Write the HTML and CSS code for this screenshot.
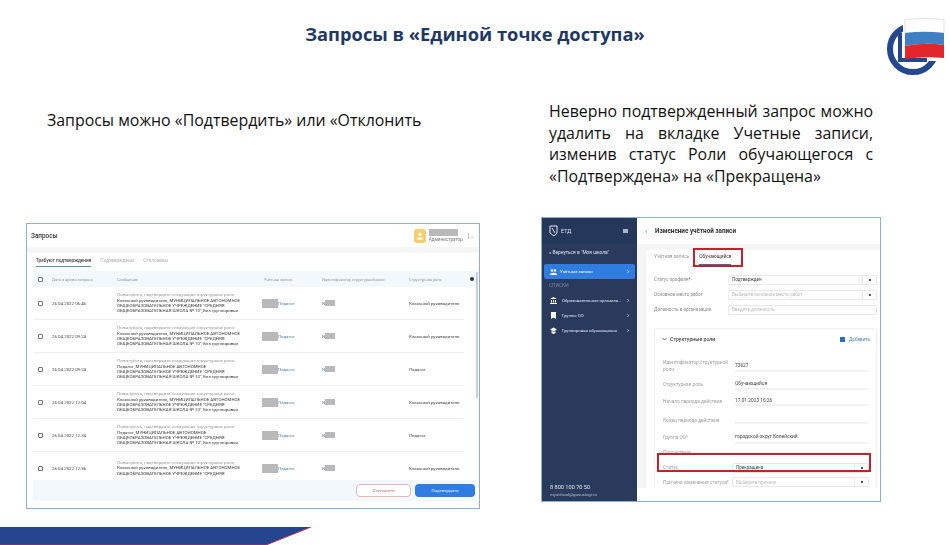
FILE: index.html
```html
<!DOCTYPE html>
<html lang="ru">
<head>
  <meta charset="UTF-8" />
  <title>Запросы в «Единой точке доступа»</title>
  <link rel="stylesheet" href="styles.css">
</head>
<body>
<div class="slide">

  <!-- Title + logo -->
  <h1 class="slide-title">Запросы в «Единой точке доступа»</h1>
  <svg class="logo" width="60" height="60" viewBox="0 0 60 60">
    <circle cx="28" cy="33" r="23" fill="none" stroke="#24478f" stroke-width="6"/>
    <rect x="18" y="1" width="42" height="44" fill="#fff"/>
    <path d="M15 17 V44 H42" fill="none" stroke="#24478f" stroke-width="4"/>
    <path d="M20 3.5 Q40 1 59 3.5 V17 H20 Z" fill="#fff" stroke="#ccc" stroke-width=".6"/>
    <path d="M20 17 Q40 14.5 59 17 V29 Q40 26 20 30 Z" fill="#3f7fc4"/>
    <path d="M20 30 Q40 26 59 29 V42 Q40 40 20 43 Z" fill="#e2262b"/>
  </svg>

  <div class="columns">

    <!-- Left column -->
    <section class="col col-left">
      <p class="intro intro-left">Запросы можно «Подтвердить» или «Отклонить</p>

      <div class="window requests">
        <div class="req-top">
          <span class="req-title">Запросы</span>
          <span class="avatar">
            <svg width="8" height="8" viewBox="0 0 8 8"><circle cx="4" cy="2.4" r="1.6" fill="#fff"/><path d="M1 7.5 C1 4.5 7 4.5 7 7.5 Z" fill="#fff"/></svg>
          </span>
          <div class="user">
            <span class="redact user-name"></span>
            <span class="user-role">Администратор</span>
          </div>
          <span class="logout">[→</span>
        </div>
        <div class="req-band"></div>
        <div class="req-tabs">
          <span class="req-tab active">Требуют подтверждения</span>
          <span class="req-tab">Подтверждены</span>
          <span class="req-tab">Отклонены</span>
        </div>
        <div class="req-row req-head">
          <span class="check"></span>
          <span>Дата и время запроса</span>
          <span>Сообщение</span>
          <span>Учётная запись</span>
          <span>Идентификатор структурной роли</span>
          <span>Структурная роль</span>
          <span class="gear"></span>
        </div>
        <div class="req-body">
          <div class="req-row">
            <span class="check"></span>
            <span class="date">26.04.2022 06:46</span>
            <div class="msg"><span class="msg-note">Пожалуйста, подтвердите следующие структурные роли:</span>Классный руководитель, МУНИЦИПАЛЬНОЕ АВТОНОМНОЕ<br>ОБЩЕОБРАЗОВАТЕЛЬНОЕ УЧРЕЖДЕНИЕ "СРЕДНЯЯ<br>ОБЩЕОБРАЗОВАТЕЛЬНАЯ ШКОЛА № 10", Без группировки</div>
            <span class="account"><i class="redact"></i>Педагог</span>
            <span class="ident">N<i class="redact"></i></span>
            <span class="role">Классный руководитель</span>
          </div>
          <div class="req-row">
            <span class="check"></span>
            <span class="date">26.04.2022 09:24</span>
            <div class="msg"><span class="msg-note">Пожалуйста, подтвердите следующие структурные роли:</span>Классный руководитель, МУНИЦИПАЛЬНОЕ АВТОНОМНОЕ<br>ОБЩЕОБРАЗОВАТЕЛЬНОЕ УЧРЕЖДЕНИЕ "СРЕДНЯЯ<br>ОБЩЕОБРАЗОВАТЕЛЬНАЯ ШКОЛА № 10", Без группировки</div>
            <span class="account"><i class="redact"></i>Педагог</span>
            <span class="ident">N<i class="redact"></i></span>
            <span class="role">Классный руководитель</span>
          </div>
          <div class="req-row">
            <span class="check"></span>
            <span class="date">26.04.2022 09:24</span>
            <div class="msg"><span class="msg-note">Пожалуйста, подтвердите следующие структурные роли:</span>Педагог, МУНИЦИПАЛЬНОЕ АВТОНОМНОЕ<br>ОБЩЕОБРАЗОВАТЕЛЬНОЕ УЧРЕЖДЕНИЕ "СРЕДНЯЯ<br>ОБЩЕОБРАЗОВАТЕЛЬНАЯ ШКОЛА № 10", Без группировки</div>
            <span class="account"><i class="redact"></i>Педагог</span>
            <span class="ident">N<i class="redact"></i></span>
            <span class="role">Педагог</span>
          </div>
          <div class="req-row">
            <span class="check"></span>
            <span class="date">26.04.2022 12:04</span>
            <div class="msg"><span class="msg-note">Пожалуйста, подтвердите следующие структурные роли:</span>Классный руководитель, МУНИЦИПАЛЬНОЕ АВТОНОМНОЕ<br>ОБЩЕОБРАЗОВАТЕЛЬНОЕ УЧРЕЖДЕНИЕ "СРЕДНЯЯ<br>ОБЩЕОБРАЗОВАТЕЛЬНАЯ ШКОЛА № 10", Без группировки</div>
            <span class="account"><i class="redact"></i>Педагог</span>
            <span class="ident">N<i class="redact"></i></span>
            <span class="role">Классный руководитель</span>
          </div>
          <div class="req-row">
            <span class="check"></span>
            <span class="date">26.04.2022 12:34</span>
            <div class="msg"><span class="msg-note">Пожалуйста, подтвердите следующие структурные роли:</span>Педагог, МУНИЦИПАЛЬНОЕ АВТОНОМНОЕ<br>ОБЩЕОБРАЗОВАТЕЛЬНОЕ УЧРЕЖДЕНИЕ "СРЕДНЯЯ<br>ОБЩЕОБРАЗОВАТЕЛЬНАЯ ШКОЛА № 10", Без группировки</div>
            <span class="account"><i class="redact"></i>Педагог</span>
            <span class="ident">N<i class="redact"></i></span>
            <span class="role">Педагог</span>
          </div>
          <div class="req-row">
            <span class="check"></span>
            <span class="date">26.04.2022 12:36</span>
            <div class="msg"><span class="msg-note">Пожалуйста, подтвердите следующие структурные роли:</span>Классный руководитель, МУНИЦИПАЛЬНОЕ АВТОНОМНОЕ<br>ОБЩЕОБРАЗОВАТЕЛЬНОЕ УЧРЕЖДЕНИЕ "СРЕДНЯЯ</div>
            <span class="account"><i class="redact"></i>Педагог</span>
            <span class="ident">N<i class="redact"></i></span>
            <span class="role">Классный руководитель</span>
          </div>
        </div>
        <div class="req-foot">
          <button class="btn-reject">Отклонить</button>
          <button class="btn-confirm">Подтвердить</button>
        </div>
        <div class="scrollbar"></div>
      </div>
    </section>

    <!-- Right column -->
    <section class="col col-right">
      <p class="intro intro-right">Неверно подтвержденный запрос можно удалить на вкладке Учетные записи, изменив статус Роли обучающегося с «Подтверждена» на «Прекращена»</p>

      <div class="window account-win">
        <aside class="side">
          <div class="side-top">
            <svg width="9" height="12" viewBox="0 0 9 12"><path d="M1 1 H8 V8 L5 11 L1 8 Z M3 3 L6 8" fill="none" stroke="#dfe5ef" stroke-width="1"/></svg>
            <span>ЕТД</span>
            <span class="burger"></span>
          </div>
          <div class="side-back">« Вернуться в "Моя школа"</div>
          <div class="side-item active">
            <svg width="7" height="6" viewBox="0 0 7 6"><circle cx="2" cy="1.5" r="1.2" fill="#fff"/><circle cx="5" cy="1.5" r="1.2" fill="#fff"/><path d="M0 6 C0 3 7 3 7 6 Z" fill="#fff"/></svg>
            <span>Учётные записи</span><b>›</b>
          </div>
          <div class="side-label">СПИСКИ</div>
          <div class="side-item">
            <svg width="7" height="7" viewBox="0 0 7 7"><path d="M0 2 L3.5 0 L7 2 Z M1 3 H2 V5.5 H1 Z M3 3 H4 V5.5 H3 Z M5 3 H6 V5.5 H5 Z M0 6 H7 V7 H0 Z" fill="#fff"/></svg>
            <span>Образовательные организа...</span><b>›</b>
          </div>
          <div class="side-item">
            <svg width="7" height="7" viewBox="0 0 7 7"><path d="M1 0 H6 V7 L3.5 5.5 L1 7 Z" fill="#fff"/></svg>
            <span>Группы ОО</span><b>›</b>
          </div>
          <div class="side-item">
            <svg width="7" height="7" viewBox="0 0 7 7"><path d="M0 2.5 L3.5 .5 L7 2.5 L3.5 4.5 Z M1.5 4 L3.5 5 L5.5 4 V6 L3.5 7 L1.5 6 Z" fill="#fff"/></svg>
            <span>Группировки обучающихся</span><b>›</b>
          </div>
          <div class="side-foot">
            <div class="side-phone">8 800 100 70 50</div>
            <div class="side-mail">myschool@gosuslugi.ru</div>
          </div>
        </aside>

        <div class="main">
          <div class="main-top"><span class="back">‹</span>Изменение учётной записи</div>
          <div class="main-body">
            <div class="card">
              <div class="tabs">
                <span class="tab">Учётная запись</span>
                <span class="tab active">Обучающийся</span>
              </div>
              <div class="field">
                <span class="field-label">Статус профиля<em>*</em></span>
                <span class="input select filled">Подтвержден</span>
              </div>
              <div class="field">
                <span class="field-label">Основное место работ</span>
                <span class="input select">Выберите основное место работ</span>
              </div>
              <div class="field">
                <span class="field-label">Должность в организации</span>
                <span class="input">Введите должность</span>
              </div>

              <div class="roles">
                <div class="roles-head">
                  <span class="roles-title">
                    <svg width="5" height="4" viewBox="0 0 5 4"><path d="M.5 1 L2.5 3 L4.5 1" fill="none" stroke="#444" stroke-width=".8"/></svg>
                    Структурные роли
                  </span>
                  <span class="roles-add"><i></i>Добавить</span>
                </div>
                <div class="role-row first">
                  <span class="role-label">Идентификатор структурной роли</span>
                  <span class="role-value">73627</span>
                </div>
                <div class="role-row second">
                  <span class="role-label">Структурная роль</span>
                  <span class="role-value">Обучающийся</span>
                </div>
                <div class="role-row third">
                  <span class="role-label">Начало периода действия</span>
                  <span class="role-value">17.01.2023 16:26</span>
                </div>
                <div class="role-row fourth">
                  <span class="role-label">Конец периода действия</span>
                  <span class="role-value"></span>
                </div>
                <div class="role-row fifth">
                  <span class="role-label">Группа ОО*</span>
                  <span class="role-value">городской округ Копейский</span>
                </div>
                <div class="role-row plain subsystem">
                  <span class="role-label">Подсистема</span>
                </div>
                <div class="role-row plain status">
                  <span class="role-label">Статус</span>
                  <span class="input select filled">Прекращена</span>
                </div>
                <div class="role-row plain reason">
                  <span class="role-label">Причина изменения статуса*</span>
                  <span class="input select">Выберите причину</span>
                </div>
              </div>
            </div>
          </div>
          <div class="main-foot"></div>
        </div>

        <!-- red marks drawn over the screenshot -->
        <div class="mark mark-tab"></div>
        <div class="mark mark-status"></div>
      </div>
    </section>
  </div>

  <svg class="stripe" width="320" height="18" viewBox="0 0 320 18">
    <path d="M0 0 H311 L266 18 H0 Z" fill="#25468f"/>
    <path d="M311 0 L266 18 H0" fill="none" stroke="#b03050" stroke-width="1"/>
  </svg>
</div>
</body>
</html>
```

FILE: styles.css
```css
* {
  box-sizing: border-box;
}

body {
  margin: 0;
  background: #fff;
  font-family: "Open Sans", "Noto Sans", sans-serif;
  color: #333;
}

.slide {
  position: relative;
  width: 950px;
  height: 545px;
  overflow: hidden;
  display: flex;
  flex-direction: column;
}

.slide-title {
  margin: 0;
  padding-top: 21px;
  height: 101px;
  text-align: center;
  font-size: 18.3px;
  line-height: 25px;
  font-weight: 700;
  color: #1f3864;
}

.logo {
  position: absolute;
  left: 885px;
  top: 16px;
}

.columns {
  flex: 1;
  display: flex;
}

.col-left {
  width: 541px;
  padding-left: 26px;
}

.intro {
  margin: 0;
  color: #111;
  font-size: 15.9px;
}

.intro-left {
  height: 122px;
  padding: 8px 0 0 21px;
  line-height: 22px;
}

.intro-right {
  width: 324px;
  height: 116px;
  margin-left: 8px;
  line-height: 21.7px;
  text-align: justify;
}

.window {
  position: relative;
  background: #fff;
  border: 1px solid #8fb0cc;
  overflow: hidden;
  font-family: Roboto, "Noto Sans", sans-serif;
  white-space: nowrap;
}

.redact {
  display: inline-block;
  background: #b9b9b9;
}

/* left screenshot: requests table */
.requests {
  width: 454px;
  height: 286px;
  filter: blur(.4px);
}

.req-top {
  height: 23px;
  display: flex;
  align-items: center;
  padding: 0 5px 0 4px;
}

.req-title {
  flex: 1;
  font-size: 6.4px;
  font-weight: 500;
  color: #333;
}

.avatar {
  width: 12px;
  height: 14px;
  background: #f7cd6d;
  border-radius: 3px;
  display: flex;
  align-items: center;
  justify-content: center;
  margin-right: 3px;
}

.user {
  width: 39px;
  display: flex;
  flex-direction: column;
  gap: 1px;
  font-size: 4.6px;
  color: #777;
}

.user-name {
  width: 29px;
  height: 7px;
}

.user-role {
  line-height: 6px;
}

.logout {
  font-size: 5px;
  color: #888;
}

.req-band {
  height: 6px;
  background: #f6f6f6;
}

.req-tabs {
  height: 14px;
  display: flex;
  gap: 9px;
  padding: 0 0 0 9px;
  align-items: flex-end;
  font-size: 4.7px;
  color: #b0b0b0;
}

.req-tab {
  height: 12px;
  line-height: 12px;
}

.req-tab.active {
  color: #444;
  font-weight: 500;
  border-bottom: 1.5px solid #4f94b5;
}

.req-row {
  display: grid;
  grid-template-columns: 19px 65px 145px 60px 87px 53px;
  align-items: center;
  height: 33px;
  margin: 0 15px 0 6px;
  font-size: 4.4px;
  color: #444;
  border-bottom: 1px solid #f0f0f0;
}

.req-head {
  grid-template-columns: 19px 65px 147px 58px 87px 61px 8px;
  height: 16px;
  margin: 4px 3px 0 6px;
  background: #f3f8fc;
  color: #999;
  font-size: 3.9px;
  border: 0;
}

.gear {
  width: 4px;
  height: 4px;
  background: #333;
  border-radius: 50%;
}

.req-body {
  height: 193px;
  overflow: hidden;
}

.check {
  width: 5px;
  height: 5px;
  margin-left: 5px;
  border: .8px solid #777;
  border-radius: 1px;
}

.msg {
  font-size: 4.4px;
  line-height: 5.35px;
  color: #3c3c3c;
}

.msg-note {
  display: block;
  color: #999;
}

.account {
  color: #4f7fa8;
  display: flex;
  align-items: center;
}

.account .redact {
  width: 16px;
  height: 9px;
}

.ident {
  color: #4f7fa8;
  display: flex;
  align-items: center;
}

.ident .redact {
  width: 10px;
  height: 6px;
}

.req-foot {
  height: 21px;
  margin: 0 3px 0 6px;
  background: #f3f8fc;
  display: flex;
  justify-content: flex-end;
  align-items: center;
  gap: 4px;
  padding-right: 1px;
}

.req-foot button {
  height: 13px;
  border-radius: 4px;
  padding: 0;
  font-family: inherit;
  font-size: 4.4px;
}

.btn-reject {
  width: 55px;
  background: #fff;
  border: 1px solid #e3b7b7;
  color: #b56a6a;
}

.btn-confirm {
  width: 60px;
  background: #2f7de1;
  border: none;
  color: #e8f0fb;
}

.scrollbar {
  position: absolute;
  right: 1px;
  top: 48px;
  width: 2px;
  height: 126px;
  background: #c5cfdb;
}

/* right screenshot: account form */
.account-win {
  width: 340px;
  height: 285px;
  display: flex;
  filter: blur(.55px);
}

.side {
  width: 95px;
  background: #2a3a5c;
  color: #dfe5ef;
  display: flex;
  flex-direction: column;
  font-size: 4.8px;
}

.side svg {
  flex: none;
}

.side-top {
  height: 26px;
  background: #25375a;
  display: flex;
  align-items: center;
  gap: 3px;
  padding: 0 9px 0 7px;
  font-size: 5.5px;
}

.burger {
  width: 5px;
  height: 4px;
  margin-left: auto;
  background: #aab4c6;
}

.side-back {
  height: 20px;
  padding: 6px 0 0 7px;
  line-height: 6px;
}

.side-item {
  height: 15px;
  margin: 0 2px;
  padding: 0 6px 0 6px;
  display: flex;
  align-items: center;
  gap: 5px;
  font-size: 4.3px;
}

.side-item b {
  margin-left: auto;
  font-weight: 400;
  font-size: 7px;
}

.side-item.active {
  background: #2f7de1;
  border-radius: 2px;
  color: #fff;
  gap: 3px;
}

.side-label {
  height: 14px;
  padding: 4px 0 0 7px;
  color: #7484a0;
  line-height: 6px;
}

.side-foot {
  margin-top: auto;
  padding: 0 0 3px 8px;
}

.side-phone {
  font-size: 5.6px;
  line-height: 8px;
}

.side-mail {
  font-size: 4.4px;
  line-height: 7px;
  color: #b5bfd0;
}

.main {
  flex: 1;
  display: flex;
  flex-direction: column;
  min-width: 0;
}

.main-top {
  height: 26px;
  display: flex;
  align-items: center;
  font-size: 6.3px;
  font-weight: 700;
  color: #333;
  padding-left: 8px;
}

.back {
  width: 10px;
  color: #4f94b5;
  font-size: 8px;
  font-weight: 400;
}

.main-body {
  flex: 1;
  min-height: 0;
  background: #f5f5f5;
  padding: 6px 0 0 9px;
  overflow: hidden;
}

.main-foot {
  height: 13px;
}

.card {
  background: #fff;
  border-radius: 3px 0 0 0;
  padding: 0 3px 0 8px;
  height: 260px;
}

.tabs {
  display: flex;
  gap: 10px;
  height: 16px;
  font-size: 4.8px;
  color: #999;
  margin-bottom: 6px;
}

.tab {
  line-height: 14px;
}

.tab.active {
  color: #333;
  border-bottom: 1px solid #2f6fb5;
  height: 15px;
}

.field {
  display: flex;
  align-items: center;
  height: 15px;
  font-size: 4.6px;
}

.field-label {
  width: 74px;
  color: #888;
}

.field-label em {
  color: #d33;
  font-style: normal;
}

.input {
  display: flex;
  align-items: center;
  height: 10px;
  flex: 1;
  padding-left: 3px;
  border: 1px solid #e8e8e8;
  border-radius: 2px;
  background: #fff;
  color: #bbb;
  font-size: 4.6px;
  position: relative;
}

.input.filled {
  color: #444;
}

.select::after {
  content: "";
  position: absolute;
  right: 0;
  top: 0;
  bottom: 0;
  width: 13px;
  border-left: 1px solid #e8e8e8;
  background: linear-gradient(#555, #555) center / 2px 2px no-repeat;
}

.roles {
  margin-top: 11px;
  padding: 0 8px 0 8px;
  height: 190px;
  border: 1px solid #f2f2f2;
  border-radius: 3px;
}

.roles-head {
  height: 20px;
  display: flex;
  align-items: center;
  justify-content: space-between;
  font-size: 5.2px;
}

.roles-title {
  display: flex;
  align-items: center;
  gap: 3px;
  margin-left: -1px;
  font-weight: 500;
  color: #444;
}

.roles-add {
  display: flex;
  align-items: center;
  gap: 4px;
  margin-right: -2px;
  font-size: 4.6px;
  color: #4f7fb5;
}

.roles-add i {
  width: 5px;
  height: 5px;
  background: #2f6fb5;
}

.role-row {
  display: flex;
  align-items: center;
  font-size: 4.8px;
  color: #a0a0a0;
}

.role-row.first {
  height: 22px;
  padding-top: 11px;
}

.role-row.second {
  height: 18px;
  padding-top: 8px;
}

.role-row.third {
  height: 16px;
  padding-top: 8px;
}

.role-row.fourth {
  height: 18px;
  padding-top: 12px;
}

.role-row.fifth {
  height: 20px;
  padding-top: 8px;
}

.role-label {
  width: 72px;
  line-height: 7px;
  white-space: normal;
}

.role-value {
  flex: 1;
  height: 100%;
  display: flex;
  align-items: center;
  color: #444;
  border-bottom: 1px solid #f2f2f2;
  box-shadow: 0 1px 0 #f2f2f2;
}

.role-row.subsystem {
  height: 18px;
}

.role-row.status {
  height: 13px;
}

.role-row.reason {
  height: 16px;
}

.role-row.plain .role-label {
  width: 69px;
  white-space: nowrap;
}

.role-row.plain .input {
  margin-right: -1px;
}

.mark {
  position: absolute;
  border: 2px solid #c8202b;
}

.mark-tab {
  left: 151px;
  top: 30px;
  width: 50px;
  height: 19px;
}

.mark-status {
  left: 115px;
  top: 235px;
  width: 214px;
  height: 19px;
}

.stripe {
  position: absolute;
  left: 0;
  bottom: 0;
}
```
